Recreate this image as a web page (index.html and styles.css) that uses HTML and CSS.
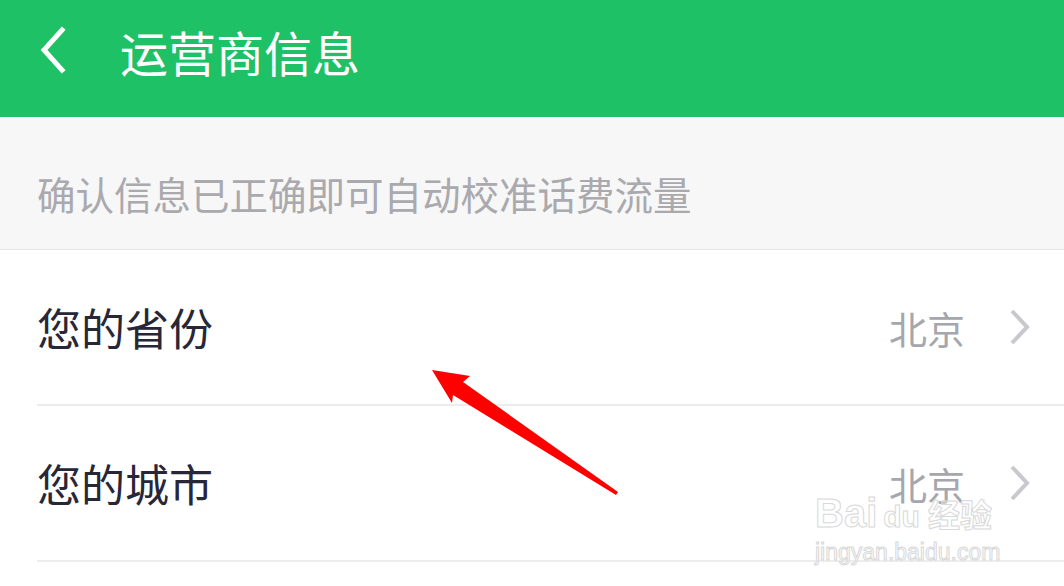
FILE: index.html
```html
<!DOCTYPE html>
<html lang="zh-CN">
<head>
    <meta charset="UTF-8">
    <meta name="viewport" content="width=device-width, initial-scale=1.0">
    <title>运营商信息</title>
    <link rel="stylesheet" href="styles.css">
</head>
<body>
    <div class="page">
        <header class="topbar">
            <svg class="back" width="30" height="48" viewBox="0 0 30 48">
                <polyline points="24,4 6,24 24,44" fill="none" stroke="#fff" stroke-width="5" stroke-linecap="square"/>
            </svg>
            <h1 class="title">运营商信息</h1>
        </header>

        <div class="notice">确认信息已正确即可自动校准话费流量</div>

        <ul class="list">
            <li class="row">
                <span class="label">您的省份</span>
                <span class="value">北京</span>
                <svg class="arrow-right" width="22" height="36" viewBox="0 0 22 36">
                    <polyline points="3,2 18,18 3,34" fill="none" stroke="#c9c9cd" stroke-width="4"/>
                </svg>
            </li>
            <li class="row">
                <span class="label">您的城市</span>
                <span class="value">北京</span>
                <svg class="arrow-right" width="22" height="36" viewBox="0 0 22 36">
                    <polyline points="3,2 18,18 3,34" fill="none" stroke="#c9c9cd" stroke-width="4"/>
                </svg>
            </li>
        </ul>

        <!-- red pointer drawn over the screenshot -->
        <svg class="pointer" width="210" height="145" viewBox="0 0 210 145">
            <polygon points="12,10 50,16 43,22 198,132 196,135 33,35 32,43" fill="#ff0000"/>
        </svg>

        <div class="watermark">
            <div class="wm-logo">Bai<span class="wm-du">du</span><span class="wm-cn">经验</span></div>
            <div class="wm-url">jingyan.baidu.com</div>
        </div>
    </div>
</body>
</html>
```

FILE: styles.css
```css
body {
    margin: 0;
    background: #fff;
    font-family: "Noto Sans CJK SC", "Noto Sans", sans-serif;
}
.page {
    position: relative;
    width: 1064px;
    height: 586px;
    overflow: hidden;
}
.topbar {
    height: 117px;
    background: #1fc166;
    display: flex;
    align-items: center;
    padding-left: 38px;
    padding-bottom: 18px;
    box-sizing: border-box;
}
.back {
    display: block;
    margin-right: 52px;
}
.title {
    margin: 0;
    color: #fff;
    font-size: 48px;
    font-weight: normal;
    line-height: 1;
    margin-top: 2px;
}
.notice {
    height: 133px;
    background: #f7f7f7;
    border-bottom: 1px solid #e8e8e8;
    box-sizing: border-box;
    display: flex;
    align-items: center;
    padding-left: 37px;
    padding-top: 20px;
    color: #a9a9ae;
    font-size: 38.5px;
}
.list {
    list-style: none;
    margin: 0;
    padding: 0 0 0 37px;
}
.row {
    height: 156px;
    display: flex;
    align-items: center;
    border-bottom: 2px solid #ededed;
    box-sizing: border-box;
    padding-right: 33px;
}
.label {
    flex: 1;
    color: #272737;
    font-size: 44px;
}
.value {
    color: #a6a6ad;
    font-size: 38px;
    margin-right: 44px;
}
.arrow-right {
    display: block;
}
.pointer {
    position: absolute;
    left: 420px;
    top: 360px;
}
.watermark {
    position: absolute;
    left: 815px;
    top: 490px;
    color: rgba(255, 255, 255, 0.4);
    -webkit-text-stroke: 1px #d8d8d8;
    font-family: "Liberation Sans", sans-serif;
}
.wm-logo {
    font-size: 40px;
    line-height: 46px;
    font-weight: bold;
    white-space: nowrap;
}
.wm-du {
    font-size: 30px;
    margin: 0 8px 0 6px;
}
.wm-cn {
    font-family: "Noto Sans CJK SC", sans-serif;
    font-size: 32px;
    font-weight: bold;
}
.wm-url {
    font-size: 23px;
    line-height: 24px;
}
```
